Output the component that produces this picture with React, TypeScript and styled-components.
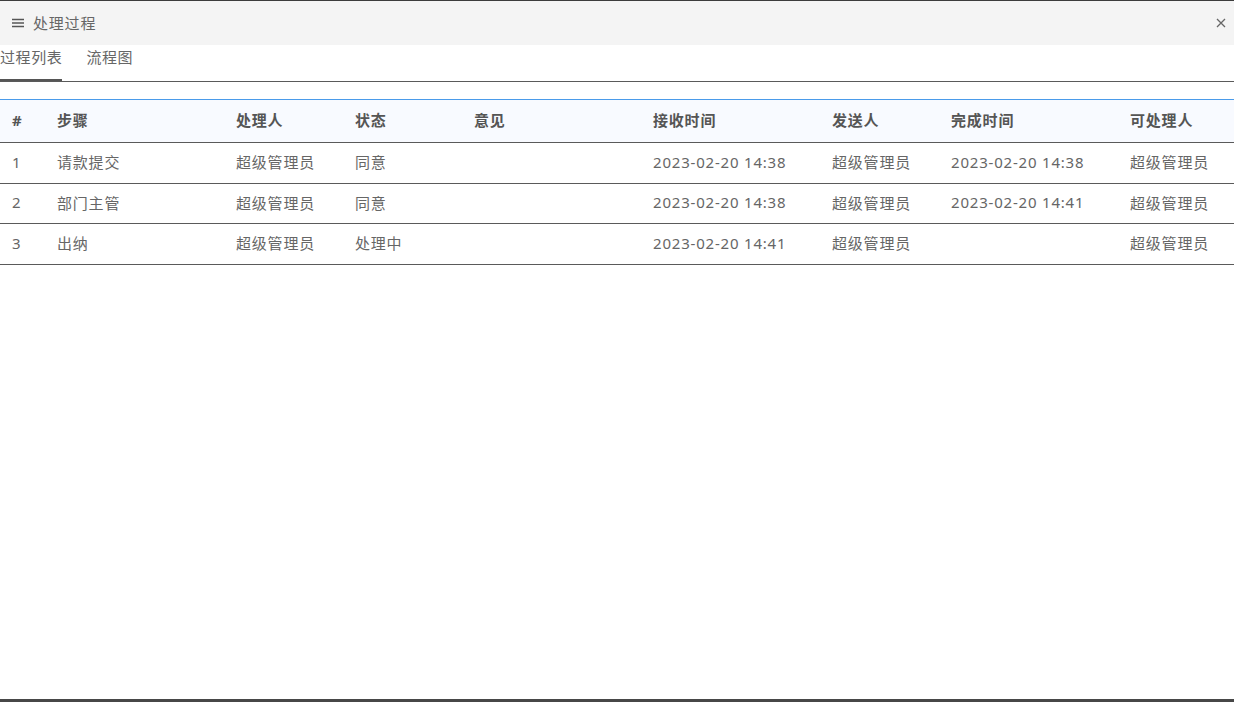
import React from "react";
import styled, { createGlobalStyle } from "styled-components";

const Global = createGlobalStyle`
  html, body { margin: 0; padding: 0; background: #fff; }
  body { font-family: "Noto Sans", "Noto Sans CJK SC", sans-serif; }
  * { box-sizing: border-box; }
`;

const Window = styled.div`
  width: 1234px;
  height: 702px;
  border-top: 1px solid #3c3c3c;
  border-bottom: 3px solid #474747;
  display: flex;
  flex-direction: column;
  background: #fff;
`;

const TitleBar = styled.div`
  height: 44px;
  background: #f4f4f4;
  display: flex;
  align-items: center;
  padding: 0 6px 0 12px;
  color: #666;
  font-size: 15px;
  letter-spacing: 0.8px;
`;

const Title = styled.span`
  margin-left: 9px;
  flex: 1;
  line-height: 1;
`;

const CloseBtn = styled.button`
  border: 0;
  background: transparent;
  padding: 0;
  width: 14px;
  height: 14px;
  display: flex;
  align-items: center;
  justify-content: center;
  cursor: pointer;
`;

const TabBar = styled.div`
  height: 37px;
  display: flex;
  gap: 24px;
  border-bottom: 1px solid #5a5a5a;
`;

const Tab = styled.div<{ $active?: boolean }>`
  height: 36px;
  font-size: 15px;
  letter-spacing: 0.6px;
  color: #666;
  display: flex;
  align-items: flex-start;
  padding-top: 1px;
  line-height: 22px;
  border-bottom: 2px solid ${(p) => (p.$active ? "#555" : "transparent")};
  margin-bottom: -1px;
`;

const Table = styled.table`
  margin-top: 17px;
  width: 100%;
  border-collapse: collapse;
  table-layout: fixed;
  border-top: 1px solid #4a9bea;
  font-size: 15px;
  letter-spacing: 0.8px;
`;

const HeadRow = styled.tr`
  background: #f8faff;
  height: 43px;
`;

const Th = styled.th`
  text-align: left;
  font-weight: bold;
  color: #555;
  padding: 0 12px 3px;
  border-bottom: 1px solid #5a5a5a;
`;

const Td = styled.td`
  color: #666;
  padding: 0 12px 2px;
  height: 40.6px;
  border-bottom: 1px solid #5a5a5a;
  white-space: nowrap;
`;

const cols = [45, 179, 119, 119, 179, 179, 119, 179, 116];
const heads = ["#", "步骤", "处理人", "状态", "意见", "接收时间", "发送人", "完成时间", "可处理人"];
const rows = [
  ["1", "请款提交", "超级管理员", "同意", "", "2023-02-20 14:38", "超级管理员", "2023-02-20 14:38", "超级管理员"],
  ["2", "部门主管", "超级管理员", "同意", "", "2023-02-20 14:38", "超级管理员", "2023-02-20 14:41", "超级管理员"],
  ["3", "出纳", "超级管理员", "处理中", "", "2023-02-20 14:41", "超级管理员", "", "超级管理员"],
];

export default function App() {
  return (
    <>
      <Global />
      <Window>
        <TitleBar>
          <svg width="12" height="10" viewBox="0 0 12 10">
            <path d="M0 1.5h12M0 5h12M0 8.5h12" stroke="#555" strokeWidth="1.3" />
          </svg>
          <Title>处理过程</Title>
          <CloseBtn aria-label="close">
            <svg width="10" height="10" viewBox="0 0 10 10">
              <path d="M1 1l8 8M9 1l-8 8" stroke="#666" strokeWidth="1.3" />
            </svg>
          </CloseBtn>
        </TitleBar>
        <TabBar>
          <Tab $active>过程列表</Tab>
          <Tab>流程图</Tab>
        </TabBar>
        <Table>
          <colgroup>
            {cols.map((w, i) => (
              <col key={i} style={{ width: w }} />
            ))}
          </colgroup>
          <thead>
            <HeadRow>
              {heads.map((h) => (
                <Th key={h}>{h}</Th>
              ))}
            </HeadRow>
          </thead>
          <tbody>
            {rows.map((r, i) => (
              <tr key={i}>
                {r.map((c, j) => (
                  <Td key={j}>{c}</Td>
                ))}
              </tr>
            ))}
          </tbody>
        </Table>
      </Window>
    </>
  );
}
